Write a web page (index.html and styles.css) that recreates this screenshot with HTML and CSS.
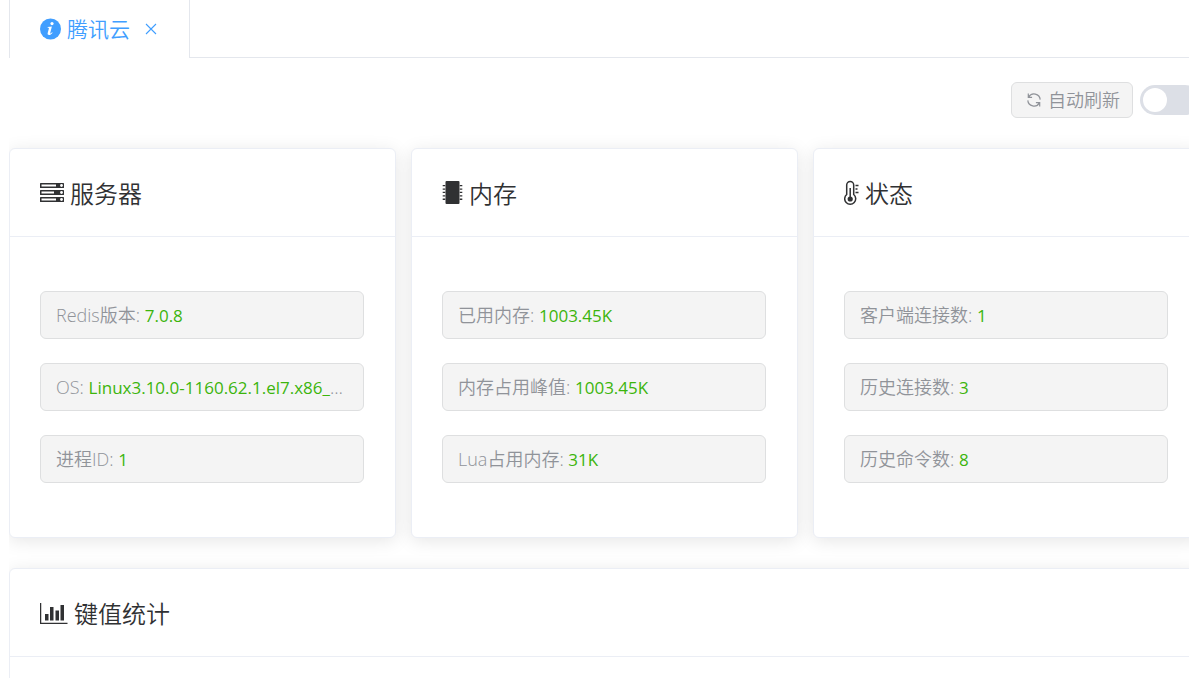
FILE: index.html
```html
<!DOCTYPE html>
<html lang="zh-CN">
<head>
<meta charset="utf-8">
<title>腾讯云</title>
<link rel="stylesheet" href="styles.css">
</head>
<body>
<main class="page">
  <nav class="tabs">
    <div class="tab">
      <a class="tab-link" href="#cloud">
        <svg class="tab-icon" width="21" height="22" viewBox="0 0 21 22" aria-hidden="true">
          <circle cx="10.500" cy="11" r="10.500" fill="#409eff"/>
          <circle cx="12" cy="5.600" r="1.600" fill="#fff"/>
          <path d="M7.700 9.100l4.200-.6-1.700 6.400c-.2.8.3.9 1.900-.7l.5.500c-1.300 1.700-2.500 2.300-3.500 2.300-1.300 0-1.700-.8-1.400-2l1.200-4.400c.2-.7 0-.9-1.300-.9z" fill="#fff"/>
        </svg>
        <span>腾讯云</span>
      </a>
      <button class="tab-close" type="button" aria-label="关闭">
        <svg width="12" height="12" viewBox="0 0 12 12"><path d="M1 1l10 10M11 1L1 11" stroke="#409eff" stroke-width="1.100" fill="none"/></svg>
      </button>
    </div>
  </nav>

  <div class="toolbar">
    <button class="refresh" type="button">
      <svg width="16" height="16" viewBox="0 0 16 16" fill="none" stroke="#909399" stroke-width="1.200" aria-hidden="true">
        <path d="M2.300 1.600v3.800h3.800M2.600 5.100A6.200 6.200 0 0 1 14.200 7.600M13.700 14.400v-3.800H9.900M13.400 10.900A6.200 6.200 0 0 1 1.800 8.400"/>
      </svg>
      <span>自动刷新</span>
    </button>
    <input class="switch" type="checkbox" role="switch" aria-label="自动刷新">
  </div>

  <div class="cards">
    <section class="card">
      <h2 class="card-head">
        <svg width="24" height="22" viewBox="0 0 24 22" aria-hidden="true">
          <rect x="0" y="1" width="24" height="5" rx=".6" fill="#303133"/>
          <rect x="0" y="8" width="24" height="5" rx=".6" fill="#303133"/>
          <rect x="0" y="15" width="24" height="5" rx=".6" fill="#303133"/>
          <path d="M1.500 2.500H16v2H1.500zM1.500 9.500H14v2H1.500zM1.500 16.500H16v2H1.500z" fill="#fff"/>
          <g fill="#fff"><circle cx="21.500" cy="3.500" r="1.400"/><circle cx="21.500" cy="10.500" r="1.400"/><circle cx="21.500" cy="17.500" r="1.400"/></g>
        </svg>
        <span>服务器</span>
      </h2>
      <div class="card-body">
        <div class="tag">Redis版本: <span class="value">7.0.8</span></div>
        <div class="tag">OS: <span class="value">Linux3.10.0-1160.62.1.el7.x86_64</span></div>
        <div class="tag">进程ID: <span class="value">1</span></div>
      </div>
    </section>
    <section class="card">
      <h2 class="card-head">
        <svg width="21" height="24" viewBox="0 0 21 24" aria-hidden="true">
          <rect x="3.500" y="0" width="14" height="23" rx="1" fill="#303133"/>
          <path d="M2 4v16M19 4v16" stroke="#303133" stroke-width="2.600" stroke-dasharray="1.300 2.100"/>
        </svg>
        <span>内存</span>
      </h2>
      <div class="card-body">
        <div class="tag">已用内存: <span class="value">1003.45K</span></div>
        <div class="tag">内存占用峰值: <span class="value">1003.45K</span></div>
        <div class="tag">Lua占用内存: <span class="value">31K</span></div>
      </div>
    </section>
    <section class="card">
      <h2 class="card-head">
        <svg width="15" height="26" viewBox="0 0 15 26" fill="none" stroke="#303133" aria-hidden="true">
          <path d="M2.700 14.500V5a3.500 3.500 0 0 1 7 0v9.500a5.500 5.500 0 1 1-7 0z" stroke-width="1.500"/>
          <path d="M6.200 8v10" stroke-width="1.500"/>
          <circle cx="6.200" cy="19" r="2.600" fill="#303133" stroke="none"/>
          <path d="M11.500 5.500h3M11.500 9h2M11.500 12.500h3" stroke-width="1.300"/>
        </svg>
        <span>状态</span>
      </h2>
      <div class="card-body">
        <div class="tag">客户端连接数: <span class="value">1</span></div>
        <div class="tag">历史连接数: <span class="value">3</span></div>
        <div class="tag">历史命令数: <span class="value">8</span></div>
      </div>
    </section>
  </div>

  <section class="card">
    <h2 class="card-head">
      <svg width="28" height="22" viewBox="0 0 28 22" aria-hidden="true">
        <path d="M.6 1v20.300H27.500" fill="none" stroke="#303133" stroke-width="1.300"/>
        <path d="M5 12h3.500v6.500H5zM10 5h3.500v13.500H10zM15.500 8.500H19v10h-3.500zM20.500 3H24v15.500h-3.500z" fill="#303133"/>
      </svg>
      <span>键值统计</span>
    </h2>
    <div class="card-body"></div>
  </section>
</main>
</body>
</html>
```
FILE: styles.css
```css
* {
  box-sizing: border-box;
}

body {
  margin: 0;
  background: #fff;
  color: #303133;
  font-family: "Open Sans", "Noto Sans CJK SC", sans-serif;
  font-weight: 350;
  overflow: hidden;
}

button {
  font: inherit;
  cursor: pointer;
}

svg {
  display: block;
  flex: none;
}

.page {
  margin: 0 -11px 0 9px;
  overflow: hidden;
}

.tabs {
  display: flex;
}

.tabs::after {
  content: "";
  flex: 1;
  border-bottom: 1px solid #e4e7ed;
}

.tab {
  display: flex;
  align-items: center;
  gap: 15px;
  height: 58px;
  padding: 0 32px 0 30px;
  border: solid #e4e7ed;
  border-width: 0 1px;
}

.tab-link {
  display: flex;
  align-items: center;
  gap: 6px;
  color: #409eff;
  font-size: 21px;
  line-height: 30px;
  text-decoration: none;
}

.tab-close {
  padding: 0;
  border: 0;
  background: none;
}

.toolbar {
  display: flex;
  justify-content: flex-end;
  align-items: center;
  gap: 7px;
  padding: 24px 0 30px;
}

.refresh {
  display: flex;
  align-items: center;
  gap: 6px;
  height: 36px;
  padding: 0 12px 0 14px;
  border: 1px solid #dedfe0;
  border-radius: 6px;
  background: #f4f4f4;
  color: #909399;
  font-size: 18px;
  line-height: 24px;
}

.switch {
  appearance: none;
  display: flex;
  align-items: center;
  width: 60px;
  height: 30px;
  margin: 0;
  padding: 3px;
  border-radius: 15px;
  background: #dcdfe6;
}

.switch::before {
  content: "";
  width: 24px;
  height: 24px;
  border-radius: 50%;
  background: #fff;
}

.switch:checked {
  justify-content: flex-end;
  background: #409eff;
}

.cards {
  display: grid;
  grid-template-columns: repeat(3, minmax(0, 1fr));
  gap: 15px;
  margin-bottom: 30px;
}

.card {
  border: 1px solid #ebeef5;
  border-radius: 6px;
  background: #fff;
  box-shadow: 0 3px 18px rgba(0, 0, 0, 0.1);
}

.card-head {
  display: flex;
  align-items: center;
  gap: 6px;
  height: 88px;
  margin: 0;
  padding: 0 30px;
  border-bottom: 1px solid #ebeef5;
  font-size: 24px;
  font-weight: 350;
}

.card-body {
  display: grid;
  gap: 24px;
  padding: 54px 31px 54px 30px;
}

.tag {
  height: 48px;
  padding: 0 20px 0 15px;
  overflow: hidden;
  border: 1px solid #dedfe0;
  border-radius: 6px;
  background: #f4f4f4;
  color: #909399;
  font-size: 18px;
  line-height: 46px;
  text-overflow: ellipsis;
  white-space: nowrap;
}

.value {
  color: #3cb50c;
  font-size: 17px;
  font-weight: 400;
}
```
